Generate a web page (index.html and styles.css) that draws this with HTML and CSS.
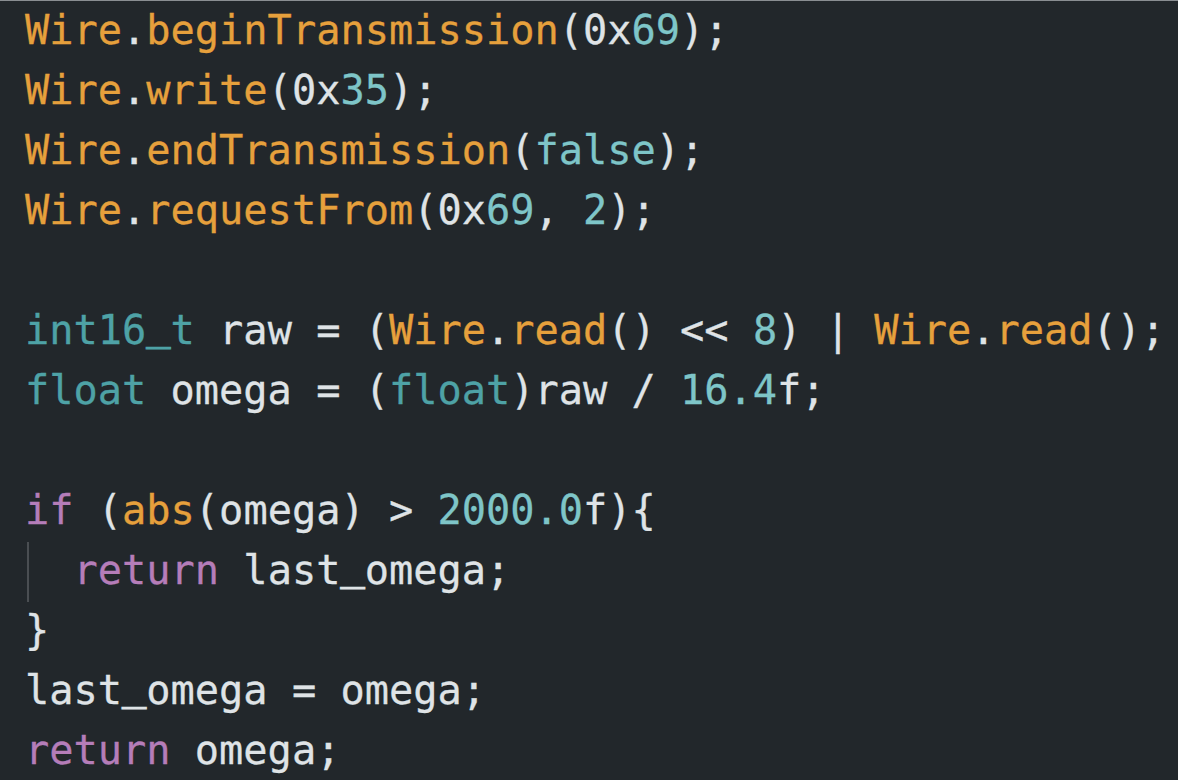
FILE: index.html
```html
<!DOCTYPE html>
<html>
<head>
<meta charset="utf-8">
<link rel="stylesheet" href="styles.css">
</head>
<body>
<pre class="code"><div class="line"><span class="fn">Wire</span><span class="op">.</span><span class="fn">beginTransmission</span>(0x<span class="num">69</span>);</div><div class="line"><span class="fn">Wire</span><span class="op">.</span><span class="fn">write</span>(0x<span class="num">35</span>);</div><div class="line"><span class="fn">Wire</span><span class="op">.</span><span class="fn">endTransmission</span>(<span class="num">false</span>);</div><div class="line"><span class="fn">Wire</span><span class="op">.</span><span class="fn">requestFrom</span>(0x<span class="num">69</span>, <span class="num">2</span>);</div><div class="line"> </div><div class="line"><span class="type">int16<span class="us">_</span>t</span> raw = (<span class="fn">Wire</span><span class="op">.</span><span class="fn">read</span>() &lt;&lt; <span class="num">8</span>) | <span class="fn">Wire</span><span class="op">.</span><span class="fn">read</span>();</div><div class="line"><span class="type">float</span> omega = (<span class="type">float</span>)raw / <span class="num">16.4</span>f;</div><div class="line"> </div><div class="line"><span class="kw">if</span> (<span class="fn">abs</span>(omega) &gt; <span class="num">2000.0</span>f){</div><div class="line indented"><span class="guide"></span>  <span class="kw">return</span> last<span class="us">_</span>omega;</div><div class="line">}</div><div class="line">last<span class="us">_</span>omega = omega;</div><div class="line"><span class="kw">return</span> omega;</div></pre>
</body>
</html>
```
FILE: styles.css
```css
html, body {
  margin: 0;
  padding: 0;
  background: #22272b;
  height: 100%;
  overflow: hidden;
}
body {
  border-top: 1px solid #8a8e92;
  box-sizing: border-box;
}
.code {
  margin: 0;
  padding: 0 0 0 25px;
  font-family: "DejaVu Sans Mono", monospace;
  font-size: 40.3px;
  line-height: 60px;
  color: #dfe3e6;
  white-space: pre;
  -webkit-text-stroke: 0.3px currentColor;
}
.line {
  height: 60px;
  position: relative;
}
.fn { color: #e6a03c; }
.op { color: #dfe3e6; }
.num { color: #7ec5c8; }
.type { color: #4ea2a6; }
.kw { color: #b57db9; }
.us {
  vertical-align: 5px;
  line-height: 1;
  -webkit-text-stroke: 1.2px currentColor;
}
.guide {
  position: absolute;
  left: 2px;
  top: 1px;
  width: 2px;
  height: 60px;
  background: #4a4e52;
}
```
